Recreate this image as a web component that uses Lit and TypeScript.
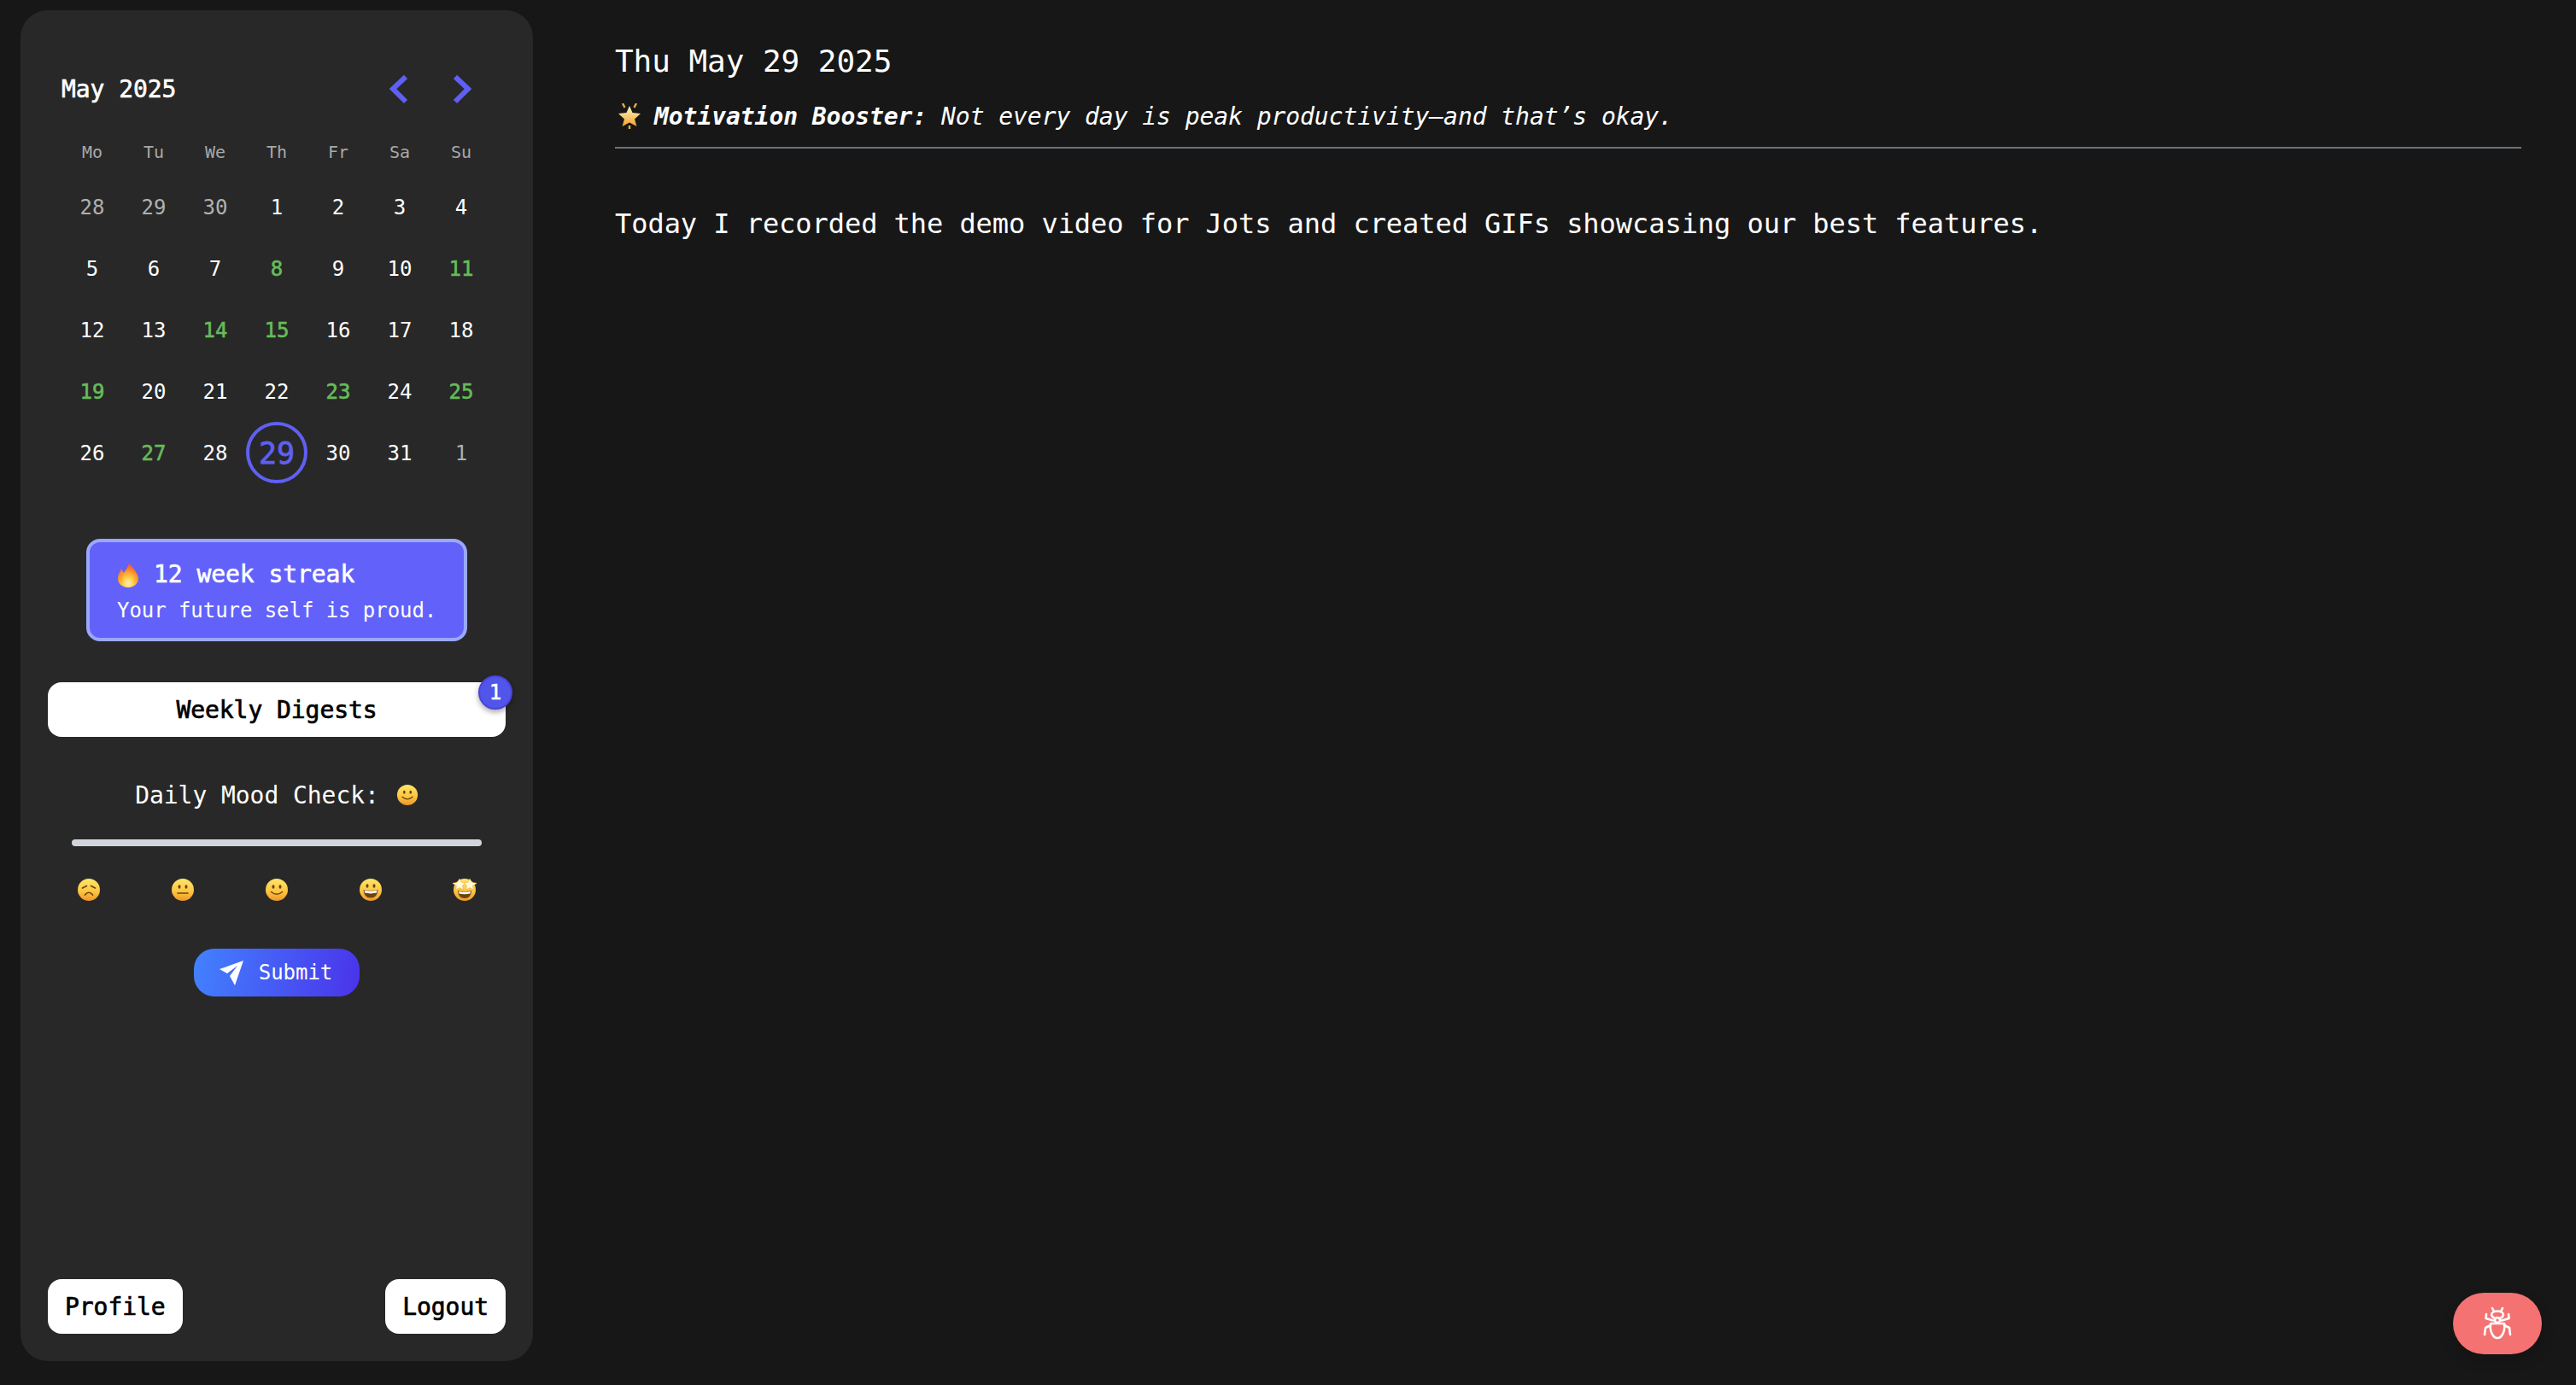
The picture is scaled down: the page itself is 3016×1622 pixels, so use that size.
import { LitElement, html, css, svg } from "lit";
import { customElement } from "lit/decorators.js";

type Cell = { d: number; k?: "muted" | "done" | "today" };
const done = new Set([8, 11, 14, 15, 19, 23, 25, 27]);
const cells: Cell[] = [
  { d: 28, k: "muted" }, { d: 29, k: "muted" }, { d: 30, k: "muted" },
  ...Array.from({ length: 31 }, (_, i): Cell => {
    const d = i + 1;
    return { d, k: d === 29 ? "today" : done.has(d) ? "done" : undefined };
  }),
  { d: 1, k: "muted" },
];

const dark = "#6b4310";
const faces: Record<string, unknown> = {
  sad: svg`<path d="M6.5 12 L11.5 9.6 M21.5 12 L16.5 9.6" stroke="${dark}" stroke-width="1.7" stroke-linecap="round" fill="none"/><path d="M9.5 20 Q14 14.5 18.5 20" stroke="${dark}" stroke-width="1.7" stroke-linecap="round" fill="none"/>`,
  neutral: svg`<ellipse cx="10" cy="10.5" rx="1.5" ry="2.2" fill="${dark}"/><ellipse cx="18" cy="10.5" rx="1.5" ry="2.2" fill="${dark}"/><path d="M8 18 H20" stroke="${dark}" stroke-width="1.6" stroke-linecap="round"/>`,
  smile: svg`<ellipse cx="10" cy="10.5" rx="1.5" ry="2.2" fill="${dark}"/><ellipse cx="18" cy="10.5" rx="1.5" ry="2.2" fill="${dark}"/><path d="M7.5 16.5 Q14 22 20.5 16.5" stroke="${dark}" stroke-width="1.5" stroke-linecap="round" fill="none"/>`,
  grin: svg`<ellipse cx="10" cy="9.5" rx="1.5" ry="2.2" fill="${dark}"/><ellipse cx="18" cy="9.5" rx="1.5" ry="2.2" fill="${dark}"/><path d="M5.5 14 Q14 16 22.5 14 Q22 23.5 14 23.5 Q6 23.5 5.5 14Z" fill="${dark}"/><path d="M6.5 14.6 Q14 16.4 21.5 14.6 L21 17.6 Q14 19.2 7 17.6Z" fill="#fff"/>`,
  star: svg`<path d="M6 15 Q14 17 22 15 Q21.5 24 14 24 Q6.5 24 6 15Z" fill="${dark}"/><path d="M7 15.7 Q14 17.5 21 15.7 L20.5 18.4 Q14 19.9 7.5 18.4Z" fill="#fff"/><path d="M8 1 L10.2 5.2 L15 5.8 L11.5 9 L12.4 14 L8 11.6 L3.6 14 L4.5 9 L-1 6.4 L5.8 5.2Z" fill="#fffbe0" stroke="#e8a52a" stroke-width="0.5"/><path d="M20 1 L22.2 5.2 L29 6.4 L23.5 9 L24.4 14 L20 11.6 L15.6 14 L16.5 9 L13 5.8 L17.8 5.2Z" fill="#fffbe0" stroke="#e8a52a" stroke-width="0.5"/>`,
};

function emoji(name: string, label: string) {
  return html`<svg class="emoji" viewBox="0 0 28 28" role="img" aria-label=${label}>
    <defs>
      <linearGradient id="face-${name}" x1="0" y1="0" x2="0" y2="1">
        <stop offset="0" stop-color="#ffe56a" />
        <stop offset="0.6" stop-color="#fcc43f" />
        <stop offset="1" stop-color="#ee962a" />
      </linearGradient>
    </defs>
    <circle cx="14" cy="14" r="13" fill="url(#face-${name})" />
    ${faces[name]}
  </svg>`;
}

@customElement("app-root")
export class AppRoot extends LitElement {
  static styles = css`
    :host {
      display: flex;
      position: relative;
      height: 1622px;
      overflow: hidden;
      background: #171717;
      color: #fff;
      font-family: "DejaVu Sans Mono", "Liberation Mono", monospace;
      letter-spacing: -0.0035em;
    }
    .sidebar {
      box-sizing: border-box;
      flex: none;
      width: 600px;
      height: 1582px;
      margin: 12px 0 0 24px;
      padding: 0 32px 32px;
      background: #282828;
      border-radius: 32px;
      display: flex;
      flex-direction: column;
    }
    .cal { padding: 0 16px; margin-top: 64px; }
    .cal-head {
      height: 56px;
      display: flex;
      align-items: center;
      font-size: 28px;
      -webkit-text-stroke: 0.6px currentColor;
    }
    .cal-title { flex: 1; }
    .nav { display: flex; gap: 48px; margin-right: 21px; }
    .nav svg { width: 27px; height: 36px; display: block; }
    .grid { display: grid; grid-template-columns: repeat(7, 72px); }
    .weekdays { margin-top: 17px; height: 57px; align-items: center; }
    .weekdays span { text-align: center; font-size: 20px; color: #a8a8a8; }
    .day {
      box-sizing: border-box;
      height: 72px;
      padding-top: 2px;
      display: flex;
      align-items: center;
      justify-content: center;
      font-size: 24px;
    }
    .day.muted { color: #b0b0b0; }
    .day.done { color: #66bb5a; -webkit-text-stroke: 0.6px currentColor; }
    .day.today {
      border: 4px solid #5f60f2;
      border-radius: 50%;
      color: #5f60f2;
      font-size: 35px;
      -webkit-text-stroke: 0.8px currentColor;
    }
    .streak {
      box-sizing: border-box;
      align-self: center;
      width: 446px;
      height: 120px;
      margin-top: 65px;
      padding: 4px 0 0 32px;
      background: #6262fa;
      border: 4px solid #9aa8fa;
      border-radius: 16px;
      display: flex;
      flex-direction: column;
      justify-content: center;
      gap: 8px;
    }
    .streak-title {
      display: flex;
      align-items: center;
      gap: 17px;
      font-size: 28px;
      line-height: 36px;
      -webkit-text-stroke: 0.6px currentColor;
    }
    .streak-title svg { width: 26px; height: 30px; }
    .streak-sub { font-size: 24px; line-height: 32px; white-space: nowrap; }
    .btn {
      box-sizing: border-box;
      height: 64px;
      background: #fff;
      color: #000;
      border-radius: 16px;
      display: flex;
      align-items: center;
      justify-content: center;
      font-size: 28px;
      -webkit-text-stroke: 0.7px currentColor;
    }
    .digest { position: relative; margin-top: 48px; }
    .badge {
      position: absolute;
      top: -8px;
      right: -8px;
      box-sizing: border-box;
      width: 40px;
      height: 40px;
      border-radius: 50%;
      background: #5155e9;
      border: 2px solid #4a44d8;
      box-shadow: 0 3px 6px rgba(0, 0, 0, 0.35);
      color: #fff;
      font-size: 24px;
      -webkit-text-stroke: 0.5px currentColor;
      display: flex;
      align-items: center;
      justify-content: center;
    }
    .mood {
      margin-top: 48px;
      height: 40px;
      display: flex;
      align-items: center;
      justify-content: center;
      gap: 20px;
      font-size: 28px;
    }
    .emoji { width: 28px; height: 28px; display: block; flex: none; }
    .mood .emoji { width: 26px; height: 26px; }
    .track {
      margin: 32px 28px 0;
      height: 8px;
      border-radius: 4px;
      background: #d1d5db;
    }
    .scale {
      margin: 37px 28px 0;
      height: 28px;
      display: flex;
      justify-content: space-between;
    }
    .scale span { width: 40px; display: flex; justify-content: center; }
    .submit {
      align-self: center;
      box-sizing: border-box;
      width: 194px;
      height: 56px;
      margin-top: 55px;
      padding-right: 4px;
      border-radius: 24px;
      background: linear-gradient(100deg, #4282ff, #4a33ea);
      display: flex;
      align-items: center;
      justify-content: center;
      gap: 16px;
      font-size: 24px;
    }
    .submit svg { width: 32px; height: 32px; display: block; }
    .foot { margin-top: auto; display: flex; justify-content: space-between; }
    .foot .btn { padding: 0 20px; }
    .main {
      flex: 1;
      min-width: 0;
      padding: 48px 64px 0 96px;
    }
    .date { font-size: 36px; line-height: 48px; }
    .booster {
      margin-top: 20px;
      height: 40px;
      display: flex;
      align-items: center;
      gap: 15px;
      font-size: 28px;
      font-style: italic;
    }
    .booster svg { width: 28px; height: 30px; margin-left: 3px; flex: none; }
    .booster b { font-weight: 700; }
    .rule { height: 2px; margin-top: 16px; background: #6b7280; }
    .body { margin-top: 66px; font-size: 32px; line-height: 44px; }
    .bug {
      position: absolute;
      right: 40px;
      bottom: 36px;
      width: 104px;
      height: 72px;
      border-radius: 36px;
      background: #f47272;
      box-shadow: 0 8px 16px rgba(0, 0, 0, 0.18);
      display: flex;
      align-items: center;
      justify-content: center;
    }
    .bug svg { width: 50px; height: 50px; display: block; }
  `;

  render() {
    return html`
      <aside class="sidebar">
        <div class="cal">
          <div class="cal-head">
            <span class="cal-title">May 2025</span>
            <div class="nav">
              <svg viewBox="0 0 27 36" fill="none" stroke="#5f60f2" stroke-width="6"><path d="M22 4 L7 18 L22 33" /></svg>
              <svg viewBox="0 0 27 36" fill="none" stroke="#5f60f2" stroke-width="6"><path d="M5 4 L20 18 L5 33" /></svg>
            </div>
          </div>
          <div class="grid weekdays">
            ${["Mo", "Tu", "We", "Th", "Fr", "Sa", "Su"].map((d) => html`<span>${d}</span>`)}
          </div>
          <div class="grid">
            ${cells.map((c) => html`<div class="day ${c.k ?? ""}">${c.d}</div>`)}
          </div>
        </div>
        <div class="streak">
          <div class="streak-title">
            <svg viewBox="0 0 26 30" role="img" aria-label="fire">
              <defs>
                <radialGradient id="flame" cx="0.5" cy="0.85" r="0.85">
                  <stop offset="0" stop-color="#fff3b0" />
                  <stop offset="0.35" stop-color="#ffc53d" />
                  <stop offset="0.7" stop-color="#fb7a2a" />
                  <stop offset="1" stop-color="#e8452c" />
                </radialGradient>
              </defs>
              <path d="M14 0 C16 6 23 10 25 18 C26 25 20 30 13 30 C6 30 0 25 1 18 C1.5 14 4 11 5 8 C6.5 10 7 12 8 13 C10 9 14 6 14 0Z" fill="url(#flame)" />
            </svg>
            <span>12 week streak</span>
          </div>
          <div class="streak-sub">Your future self is proud.</div>
        </div>
        <div class="btn digest">Weekly Digests<span class="badge">1</span></div>
        <div class="mood"><span>Daily Mood Check:</span>${emoji("smile", "slightly smiling face")}</div>
        <div class="track"></div>
        <div class="scale">
          <span>${emoji("sad", "disappointed face")}</span>
          <span>${emoji("neutral", "neutral face")}</span>
          <span>${emoji("smile", "slightly smiling face")}</span>
          <span>${emoji("grin", "grinning face")}</span>
          <span>${emoji("star", "star-struck face")}</span>
        </div>
        <div class="submit">
          <svg viewBox="0 0 32 32" fill="#fff"><path d="M30 2 L2 12 L11 17 L23 8 L14 20 L20 31Z" /></svg>
          <span>Submit</span>
        </div>
        <div class="foot">
          <div class="btn">Profile</div>
          <div class="btn">Logout</div>
        </div>
      </aside>
      <main class="main">
        <div class="date">Thu May 29 2025</div>
        <div class="booster">
          <svg viewBox="0 0 28 30" role="img" aria-label="glowing star">
            <defs>
              <linearGradient id="glow" x1="0" y1="0" x2="0" y2="1">
                <stop offset="0" stop-color="#fff6c4" />
                <stop offset="1" stop-color="#f0a32c" />
              </linearGradient>
            </defs>
            <path d="M14 3 L17.5 11 L27 12 L20 18.5 L22.5 27 L14 22.5 L5.5 27 L8 18.5 L1 12 L10.5 11Z" fill="url(#glow)" />
            <path d="M6 0 L8.5 5 M22 0 L19.5 5 M14 26 V30" stroke="#e8b040" stroke-width="2.4" />
          </svg>
          <span><b>Motivation Booster:</b> Not every day is peak productivity—and that’s okay.</span>
        </div>
        <div class="rule"></div>
        <div class="body">Today I recorded the demo video for Jots and created GIFs showcasing our best features.</div>
      </main>
      <div class="bug">
        <svg viewBox="0 0 50 50" fill="none" stroke="#fff" stroke-width="2.6" stroke-linecap="round" stroke-linejoin="round">
          <path d="M17 25 H33 C34.5 34 30 42 25 42 C20 42 15.5 34 17 25Z" />
          <circle cx="25" cy="21" r="3" />
          <path d="M18 15 C18 9 32 9 32 15 C31 18 28 19 27 19 M18 15 C19 18 22 19 23 19" />
          <path d="M19 7 L21 11 M31 7 L29 11" />
          <path d="M12 14 L11.5 19 L20 21.5 M38 14 L38.5 19 L30 21.5" />
          <path d="M10 38 L11 30 L17 27 M40 38 L39 30 L33 27" />
        </svg>
      </div>
    `;
  }
}
